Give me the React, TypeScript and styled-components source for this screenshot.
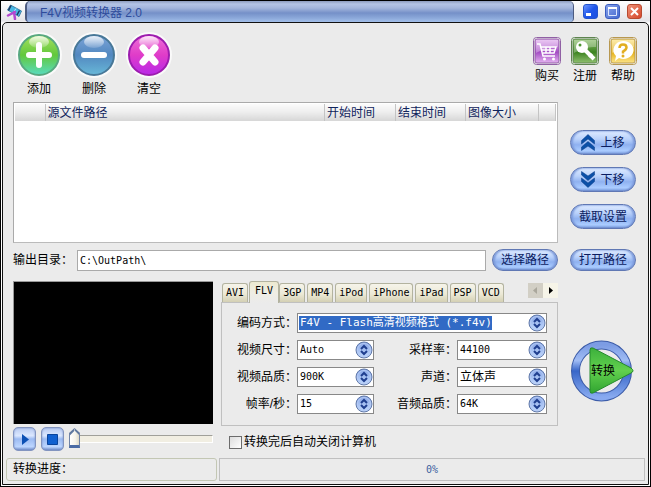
import React from 'react';
import styled, { createGlobalStyle, css } from 'styled-components';

const cjk = `"Liberation Sans", "Noto Sans CJK SC", sans-serif`;
const mono = `"DejaVu Sans Mono", "Noto Sans CJK SC", monospace`;

const GlobalStyle = createGlobalStyle`
  *, *::before, *::after { box-sizing: border-box; }
  body { margin: 0; background: #fff; font: 12px/16px ${cjk}; color: #000; }
  button, input, select { font: inherit; color: inherit; margin: 0; }
  button { padding: 0; border: 0; background: none; cursor: pointer; }
`;

const Window = styled.div`
  min-height: 100vh;
  display: flex;
  flex-direction: column;
  padding: 0 1px 1px;
  border: 1px solid #000;
  background: linear-gradient(#fff, #e4e4e8 20px, #fff 22px);
`;

const TitleBar = styled.header`
  display: flex;
  align-items: stretch;
  height: 21px;
`;

const AppIcon = styled.svg`
  width: 16px;
  height: 16px;
  margin: 3px 3px 0 4px;
`;

const Title = styled.h1`
  flex: 1;
  margin: 0;
  padding-left: 13px;
  border: 1px solid #4d5b80;
  border-width: 0 1px 0 2px;
  border-radius: 5px 5px 4px 4px;
  background: linear-gradient(#8c9bbd, #b4c4e6 3px, #a3b5dc 7px, #7590c8 12px, #8ba8da 17px, #a3bfe9);
  color: #2e4c9c;
  font-size: 12px;
  font-weight: 400;
  line-height: 24px;
`;

const Captions = styled.div`
  display: flex;
  gap: 7px;
  padding: 3px 7px 0 9px;
`;

const Caption = styled.button<{ $tone: string; $edge: string }>`
  width: 15px;
  height: 15px;
  border: 1px solid ${p => p.$edge};
  border-radius: 3px;
  background: ${p => p.$tone};
  svg { display: block; width: 13px; height: 13px; }
`;

const Client = styled.main`
  flex: 1;
  display: flex;
  flex-direction: column;
  border: 1px solid #111;
  border-radius: 5px 5px 0 0;
  background: #ebebeb;
  padding: 0 3px 3px;
`;

const Toolbar = styled.div`
  display: flex;
  justify-content: space-between;
  height: 79px;
  padding: 9px 8px 0 10px;
`;

const ToolGroup = styled.div<{ $gap: number }>`
  display: flex;
  align-items: flex-start;
  gap: ${p => p.$gap}px;
`;

const Tool = styled.button<{ $size: number }>`
  display: flex;
  flex-direction: column;
  align-items: center;
  gap: 3px;
  width: ${p => p.$size}px;
  white-space: nowrap;
  svg { display: block; width: ${p => p.$size}px; height: ${p => p.$size}px; }
`;

const SmallTool = styled(Tool)`
  margin-top: 5px;
`;

const Workspace = styled.div`
  display: grid;
  grid-template-columns: minmax(0, 1fr) 66px;
  column-gap: 12px;
  padding: 0 9px 0 7px;
`;

const FileBox = styled.div`
  height: 141px;
  border: 1px solid #aaa;
  border-right-color: #bbb;
  border-bottom-color: #bbb;
  background: #fff;
  padding: 1px;
`;

const FileTable = styled.table`
  width: 100%;
  table-layout: fixed;
  border-collapse: collapse;
  th {
    height: 17px;
    padding: 0 0 0 2px;
    border-right: 1px solid #c4c4c4;
    background: linear-gradient(#fbfbfb, #ededed 50%, #d6d6d6);
    color: #10245c;
    font-weight: 400;
    line-height: 16px;
    text-align: left;
    white-space: nowrap;
  }
`;

const SideButtons = styled.div`
  display: flex;
  flex-direction: column;
  gap: 12px;
  padding-top: 28px;
`;

const Pill = styled.button<{ $short?: boolean }>`
  display: flex;
  align-items: center;
  justify-content: center;
  gap: 5px;
  width: 66px;
  height: ${p => (p.$short ? 22 : 25)}px;
  border: 1px solid #6078b4;
  border-radius: 13px;
  background: linear-gradient(#dfebff, #bad2fb 35%, #8fb1f0 60%, #a9cbff 85%, #86a5e2);
  box-shadow: inset 2px 0 2px #7f9ddd, inset -2px 0 2px #7f9ddd, inset 0 -1px 1px #6c89c8;
  color: #0b1c60;
  svg { width: 14px; height: 17px; }
`;

const OutputRow = styled.div`
  display: flex;
  align-items: center;
  margin-top: 6px;
  height: 22px;
`;

const OpenCell = styled.div`
  margin-top: 6px;
`;

const OutputLabel = styled.label`
  width: 64px;
`;

const PathInput = styled.input`
  flex: 1;
  min-width: 0;
  height: 21px;
  margin-right: 6px;
  padding: 0 2px;
  border: 1px solid #aaa;
  background: #fff;
  font: 10px/16px ${mono};
`;

const Lower = styled.div`
  display: grid;
  grid-template-columns: 200px minmax(0, 1fr);
  column-gap: 8px;
  margin-top: 10px;
`;

const Screen = styled.div`
  height: 143px;
  border: 1px solid #999;
  border-width: 1px 0 0 1px;
  background: #000;
`;

const Player = styled.div`
  display: flex;
  align-items: center;
  height: 24px;
  margin-top: 3px;
  gap: 5px;
`;

const PlayerButton = styled.button`
  display: grid;
  place-items: center;
  flex: none;
  width: 23px;
  height: 24px;
  border: 1px solid #8294bf;
  border-radius: 5px;
  background: linear-gradient(#b9cbf1, #dce8ff 35%, #9dbbf2 50%, #bdd6ff 85%, #7590ca);
  box-shadow: inset 0 0 2px #6c85c0;
  svg { width: 11px; height: 11px; }
`;

const Seek = styled.input`
  appearance: none;
  flex: 1;
  min-width: 0;
  height: 22px;
  background: none;
  &::-webkit-slider-runnable-track {
    height: 8px;
    border: 1px solid #fff;
    border-top-color: #a0a09a;
    border-left: 0;
    background: #f1eee2;
  }
  &::-webkit-slider-thumb {
    appearance: none;
    width: 11px;
    height: 20px;
    margin-top: -8px;
    border: 1px solid #7083a6;
    border-bottom: 3px solid #4b6ba5;
    background:
      linear-gradient(135deg, #5f789f 4px, transparent 5px) 0 0 / 50% 100% no-repeat,
      linear-gradient(225deg, #5f789f 4px, transparent 5px) 100% 0 / 50% 100% no-repeat,
      linear-gradient(90deg, #fff, #f5f3ea 60%, #ddd9c8);
    clip-path: polygon(50% 0, 100% 5px, 100% 100%, 0 100%, 0 5px);
  }
`;

const TabBar = styled.div`
  display: flex;
  align-items: flex-end;
  height: 21px;
  padding-left: 1px;
`;

const Tab = styled.button<{ $active?: boolean }>`
  height: 19px;
  padding: 0 3px;
  margin-right: 2px;
  border: 1px solid #b3b39f;
  border-bottom: 0;
  border-radius: 3px 3px 0 0;
  background: linear-gradient(#f6f4ea, #ece9d6 55%, #d4d0b4);
  font: 10px/18px ${mono};
  ${p => p.$active && css`
    height: 22px;
    margin: 0 0 -1px -1px;
    padding: 0 5px 3px;
    position: relative;
    background: linear-gradient(#ece9d0, #efeee4 50%, #ebebeb);
  `}
`;

const Scroller = styled.div`
  display: flex;
  align-self: flex-start;
  margin-left: auto;
  margin-top: 2px;
`;

const ScrollButton = styled.button`
  display: grid;
  place-items: center;
  width: 15px;
  height: 15px;
  background: #f6f4e8;
  &:disabled { background: #d2cfc5; }
  svg { width: 7px; height: 7px; }
`;

const Settings = styled.div`
  display: grid;
  grid-template-columns: 60px 77px minmax(0, 1fr) 90px;
  grid-auto-rows: 20px;
  row-gap: 7px;
  height: 124px;
  padding: 10px 10px 0 15px;
  border: 1px solid #c0c0c0;
`;

const FieldLabel = styled.label`
  line-height: 20px;
  text-align: right;
  white-space: nowrap;
`;

const Combo = styled.div<{ $wide?: boolean }>`
  position: relative;
  ${p => p.$wide && css`grid-column: 2 / -1;`}
  svg {
    position: absolute;
    top: 1px;
    right: 1px;
    width: 18px;
    height: 18px;
    pointer-events: none;
  }
`;

const Select = styled.select<{ $selected?: boolean }>`
  appearance: none;
  display: block;
  width: 100%;
  height: 20px;
  padding: 0 18px 0 2px;
  border: 1px solid #888;
  border-radius: 0;
  background: #fff;
  font: 10px/16px ${mono};
  ${p => p.$selected && css`
    background: linear-gradient(#316ac5, #316ac5) 1px 2px / 193px 14px no-repeat #fff;
    color: #fff;
    font-size: 11px;
    option { color: #000; }
  `}
`;

const CjkSelect = styled(Select)`
  font: 12px/16px ${cjk};
`;

const Shutdown = styled.label`
  display: flex;
  align-items: center;
  gap: 2px;
  margin: 4px 0 0 8px;
  height: 24px;
`;

const Check = styled.input`
  appearance: none;
  width: 13px;
  height: 13px;
  border: 1px solid #6c6c6c;
  background: linear-gradient(135deg, #ddd, #fff);
  &:checked { background: #316ac5; }
`;

const ConvertCell = styled.div`
  margin-top: 67px;
`;

const Convert = styled.button`
  display: grid;
  place-items: center;
  > * { grid-area: 1 / 1; }
  svg { width: 66px; height: 66px; }
`;

const StatusBar = styled.footer`
  display: grid;
  grid-template-columns: 211px minmax(0, 1fr);
  gap: 2px;
  margin-top: auto;
`;

const StatusText = styled.div`
  height: 23px;
  padding-left: 6px;
  border: 1px solid #c3c7b4;
  border-radius: 3px;
  line-height: 20px;
`;

const StatusProgress = styled.div`
  height: 23px;
  border: 1px solid #c0c0c0;
  color: #3b5f9f;
  font: 10px/21px ${mono};
  text-align: center;
`;

function Orb({ id, from, mid, to, rim, children }: {
  id: string; from: string; mid: string; to: string; rim: string; children: React.ReactNode;
}) {
  return (
    <svg viewBox="0 0 46 46" aria-hidden="true">
      <defs>
        <linearGradient id={id} x1="0" y1="0" x2="0" y2="1">
          <stop offset="0" stopColor={from} />
          <stop offset=".5" stopColor={mid} />
          <stop offset="1" stopColor={to} />
        </linearGradient>
        <linearGradient id={id + 'g'} x1="0" y1="0" x2="0" y2="1">
          <stop offset="0" stopColor="#fff" stopOpacity=".85" />
          <stop offset="1" stopColor="#fff" stopOpacity=".15" />
        </linearGradient>
      </defs>
      <circle cx="23" cy="23" r="23" fill="#fafafa" />
      <circle cx="23" cy="23" r="20" fill={`url(#${id})`} stroke={rim} strokeWidth="2" />
      <ellipse cx="23" cy="10" rx="10" ry="6" fill={`url(#${id}g)`} />
      {children}
    </svg>
  );
}

function Badge({ id, light, dark, edge, children }: {
  id: string; light: string; dark: string; edge: string; children: React.ReactNode;
}) {
  return (
    <svg viewBox="0 0 28 28" aria-hidden="true">
      <defs>
        <linearGradient id={id} x1="0" y1="0" x2="0" y2="1">
          <stop offset="0" stopColor={light} />
          <stop offset=".55" stopColor={dark} />
          <stop offset="1" stopColor={light} />
        </linearGradient>
      </defs>
      <rect x=".5" y=".5" width="27" height="27" rx="3" fill="#f6f6f6" stroke={edge} />
      <rect x="2" y="2" width="24" height="24" rx="2" fill={`url(#${id})`} stroke={edge} />
      <path d="M3 3h22v7Q14 9 3 16z" fill="#fff" opacity=".3" />
      {children}
    </svg>
  );
}

function ComboArrow() {
  return (
    <svg viewBox="0 0 18 18" aria-hidden="true">
      <defs>
        <linearGradient id="comboFill" x1="0" y1="0" x2="0" y2="1">
          <stop offset="0" stopColor="#86a4e4" />
          <stop offset="1" stopColor="#c4dcff" />
        </linearGradient>
      </defs>
      <circle cx="9" cy="9" r="8" fill="url(#comboFill)" stroke="#6078a8" />
      <circle cx="9" cy="9" r="6.5" fill="none" stroke="#b4caf5" />
      <path d="M6 8 9 5l3 3M6 10l3 3 3-3" fill="none" stroke="#203f8f" strokeWidth="2" />
    </svg>
  );
}

function Chevrons({ down }: { down?: boolean }) {
  return (
    <svg viewBox="0 0 14 17" aria-hidden="true">
      <g transform={down ? 'rotate(180 7 8.5)' : undefined} fill="#0b50a8" stroke="#073a86" strokeWidth=".5">
        <path d="M7 .5 13.500 6.500V10L7 5 .5 10V6.500z" />
        <path d="M7 7.500 13.500 13V16.500L7 12 .5 16.500V13z" />
      </g>
    </svg>
  );
}

function Field({ id, label, options, wide, native }: {
  id: string; label: string; options: string[]; wide?: boolean; native?: boolean;
}) {
  const Box = native ? CjkSelect : Select;
  return (
    <>
      <FieldLabel htmlFor={id}>{label}</FieldLabel>
      <Combo $wide={wide}>
        <Box id={id} $selected={wide}>
          {options.map(o => <option key={o}>{o}</option>)}
        </Box>
        <ComboArrow />
      </Combo>
    </>
  );
}

const tabs = ['AVI', 'FLV', '3GP', 'MP4', 'iPod', 'iPhone', 'iPad', 'PSP', 'VCD'];

export default function App() {
  return (
    <>
      <GlobalStyle />
      <Window>
        <TitleBar>
          <AppIcon viewBox="0 0 16 16" aria-hidden="true">
            <path d="M4.500 1 15.500 7 13 12.500 1.500 6z" fill="#48b8e4" stroke="#2b6c98" strokeWidth=".8" />
            <path d="m5 1.500-2.500 5M13.500 6.500 11 11" stroke="#1c365e" strokeWidth="1.500" />
            <path d="M10 4.500 7 9" stroke="#b8ecff" />
            <path d="M9 8 2 11.500M8 8l1 7" stroke="#b348d0" strokeWidth="2.500" strokeLinecap="round" />
          </AppIcon>
          <Title>F4V视频转换器 2.0</Title>
          <Captions>
            <Caption aria-label="最小化" $edge="#2354cc" $tone="linear-gradient(135deg, #6d96ff, #1f56ea 50%, #1d4fe0)">
              <svg viewBox="0 0 13 13"><path d="M2 9.500h5" stroke="#fff" strokeWidth="3" /></svg>
            </Caption>
            <Caption aria-label="最大化" $edge="#3a5cc0" $tone="linear-gradient(135deg, #88a3ea, #4468cf)">
              <svg viewBox="0 0 13 13"><path d="M2.500 3v7.500h8V3" fill="none" stroke="#dce6ff" /><path d="M2 3h9" stroke="#fff" strokeWidth="2" /></svg>
            </Caption>
            <Caption aria-label="关闭" $edge="#b84a30" $tone="linear-gradient(135deg, #ee9077, #d6482c)">
              <svg viewBox="0 0 13 13"><path d="m3 3 7 7m0-7-7 7" stroke="#fff" strokeWidth="2" /></svg>
            </Caption>
          </Captions>
        </TitleBar>

        <Client>
          <Toolbar>
            <ToolGroup $gap={9}>
              <Tool $size={46}>
                <Orb id="add" from="#a6e060" mid="#62c83c" to="#58dcc0" rim="#58a880">
                  <path d="M23 13v20M13 23h20" stroke="#fff" strokeWidth="6" strokeLinecap="round" />
                </Orb>
                添加
              </Tool>
              <Tool $size={46}>
                <Orb id="remove" from="#7ca4d8" mid="#5288c0" to="#68b8d8" rim="#487898">
                  <path d="M13 23h20" stroke="#fff" strokeWidth="6" strokeLinecap="round" />
                </Orb>
                删除
              </Tool>
              <Tool $size={46}>
                <Orb id="clear" from="#ee70d8" mid="#e03cc8" to="#b828e8" rim="#9c1cae">
                  <path d="m17 16 12 14M29 16 17 30" stroke="#fff" strokeWidth="7" strokeLinecap="round" />
                </Orb>
                清空
              </Tool>
            </ToolGroup>
            <ToolGroup $gap={10}>
              <SmallTool $size={28}>
                <Badge id="buy" light="#e4b4f0" dark="#a44cc4" edge="#9060a4">
                  <path d="M4 7h3l3 12h12M8 10h15l-2 6H10M9 13h13M13 10v6M17 10v6" fill="none" stroke="#fff" strokeWidth="1.500" />
                  <circle cx="11.500" cy="22" r="1.500" fill="#fff" /><circle cx="20.500" cy="22" r="1.500" fill="#fff" />
                </Badge>
                购买
              </SmallTool>
              <SmallTool $size={28}>
                <Badge id="register" light="#90c070" dark="#3c8420" edge="#5e8450">
                  <circle cx="11" cy="10" r="6" fill="#fff" />
                  <path d="m14 13 9 9" stroke="#fff" strokeWidth="4" />
                  <path d="m18 20 3-3" stroke="#fff" strokeWidth="3" />
                  <circle cx="9" cy="8" r="1.500" fill="#4c9430" />
                </Badge>
                注册
              </SmallTool>
              <SmallTool $size={28}>
                <Badge id="help" light="#fce488" dark="#e4b018" edge="#b89850">
                  <path d="M14 4a10 9 0 1 1-4 17l-4 3 1-5A10 9 0 0 1 14 4z" fill="#fff" />
                  <path d="M10.500 11q0-3.500 3.500-3.500t3.500 3q0 2-3.500 4v2" fill="none" stroke="#e2ae20" strokeWidth="2.500" />
                  <circle cx="14" cy="19" r="1.500" fill="#e2ae20" />
                </Badge>
                帮助
              </SmallTool>
            </ToolGroup>
          </Toolbar>

          <Workspace>
            <FileBox>
              <FileTable>
                <colgroup>
                  <col width="30" /><col /><col width="71" /><col width="70" /><col width="73" /><col width="17" />
                </colgroup>
                <thead>
                  <tr>
                    <th aria-label="选择" /><th>源文件路径</th><th>开始时间</th><th>结束时间</th><th>图像大小</th><th aria-label="其他" />
                  </tr>
                </thead>
                <tbody />
              </FileTable>
            </FileBox>
            <SideButtons>
              <Pill><Chevrons />上移</Pill>
              <Pill><Chevrons down />下移</Pill>
              <Pill>截取设置</Pill>
            </SideButtons>

            <OutputRow>
              <OutputLabel htmlFor="output">输出目录：</OutputLabel>
              <PathInput id="output" defaultValue={'C:\\OutPath\\'} />
              <Pill $short>选择路径</Pill>
            </OutputRow>
            <OpenCell><Pill $short>打开路径</Pill></OpenCell>

            <Lower>
              <div>
                <Screen />
                <Player>
                  <PlayerButton aria-label="播放">
                    <svg viewBox="0 0 11 11"><path d="M3 0v11l7-5.500z" fill="#0c50b4" /></svg>
                  </PlayerButton>
                  <PlayerButton aria-label="停止">
                    <svg viewBox="0 0 11 11"><path d="M.5.5h10v10H.5z" fill="#1060d0" stroke="#0a449c" /></svg>
                  </PlayerButton>
                  <Seek type="range" aria-label="播放位置" defaultValue={0} />
                </Player>
              </div>
              <div>
                <TabBar role="tablist">
                  {tabs.map(t => (
                    <Tab key={t} role="tab" aria-selected={t === 'FLV'} $active={t === 'FLV'}>{t}</Tab>
                  ))}
                  <Scroller>
                    <ScrollButton disabled aria-label="向左">
                      <svg viewBox="0 0 7 7"><path d="M5 0v7L1 3.500z" fill="#aaa79c" /></svg>
                    </ScrollButton>
                    <ScrollButton aria-label="向右">
                      <svg viewBox="0 0 7 7"><path d="M2 0v7l4-3.500z" fill="#000" /></svg>
                    </ScrollButton>
                  </Scroller>
                </TabBar>
                <Settings role="tabpanel">
                  <Field id="codec" label="编码方式：" wide options={['F4V - Flash高清视频格式 (*.f4v)']} />
                  <Field id="size" label="视频尺寸：" options={['Auto']} />
                  <Field id="rate" label="采样率：" options={['44100']} />
                  <Field id="vq" label="视频品质：" options={['900K']} />
                  <Field id="channel" label="声道：" native options={['立体声']} />
                  <Field id="fps" label="帧率/秒：" options={['15']} />
                  <Field id="aq" label="音频品质：" options={['64K']} />
                </Settings>
                <Shutdown>
                  <Check type="checkbox" />转换完后自动关闭计算机
                </Shutdown>
              </div>
            </Lower>
            <ConvertCell>
              <Convert>
                <svg viewBox="0 0 66 66" aria-hidden="true">
                  <defs>
                    <linearGradient id="ring" x1="0" y1="0" x2="0" y2="1">
                      <stop offset="0" stopColor="#7c9ce4" />
                      <stop offset=".3" stopColor="#a0bcf4" />
                      <stop offset=".5" stopColor="#3866c8" />
                      <stop offset="1" stopColor="#88aaf0" />
                    </linearGradient>
                    <linearGradient id="arrow" x1="0" y1="0" x2="0" y2="1">
                      <stop offset="0" stopColor="#3cb03c" />
                      <stop offset=".5" stopColor="#62d04e" />
                      <stop offset="1" stopColor="#30a430" />
                    </linearGradient>
                  </defs>
                  <circle cx="31.500" cy="33" r="26" fill="none" stroke="#3c5ca8" strokeWidth="9" />
                  <circle cx="31.500" cy="33" r="26" fill="none" stroke="url(#ring)" strokeWidth="7" />
                  <path d="M20 12q0-3 3-2l38 20q4 3 0 5L23 55q-3 1-3-2z" fill="url(#arrow)" stroke="#258a2c" />
                </svg>
                <span>转换</span>
              </Convert>
            </ConvertCell>
          </Workspace>

          <StatusBar>
            <StatusText>转换进度：</StatusText>
            <StatusProgress role="progressbar" aria-label="转换进度" aria-valuenow={0}>0%</StatusProgress>
          </StatusBar>
        </Client>
      </Window>
    </>
  );
}
